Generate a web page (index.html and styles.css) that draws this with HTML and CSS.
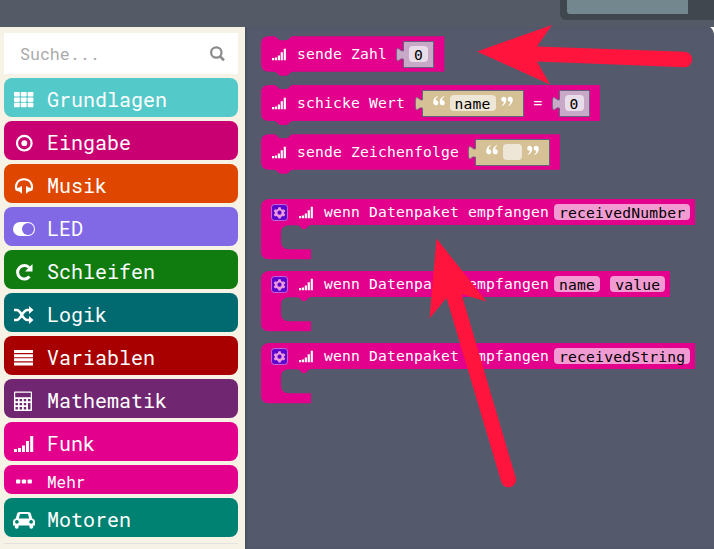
FILE: index.html
```html
<!DOCTYPE html>
<html lang="de">
<head>
<meta charset="utf-8">
<title>Blöcke</title>
<link rel="stylesheet" href="styles.css">
</head>
<body>
<svg class="defs" width="0" height="0">
  <defs>
    <symbol id="signal" viewBox="0 0 20 18"><path d="M0 14h3v3H0zM4 13h3v4H4zM8 10.500h3V17H8zM12 6h3v11h-3zM16.200 1h3v16h-3z"/></symbol>
    <symbol id="gear" viewBox="0 0 17 17"><rect x=".6" y=".6" width="15.800" height="15.800" rx="2.500" fill="#5a00cf" stroke="#c56bd8"/><path d="M7.300 3.200h2.400l.4 1.700 1.400.8 1.600-.5 1.200 2-1.200 1.200v1l1.200 1.100-1.200 2-1.600-.4-1.400.8-.4 1.500H7.300l-.4-1.500-1.400-.8-1.600.4-1.200-2 1.200-1.100v-1L2.700 7.200l1.200-2 1.600.5 1.400-.8z" fill="#ee99dc"/><circle cx="8.500" cy="8.700" r="2.100" fill="#5a00cf"/></symbol>
    <symbol id="quote" viewBox="0 0 12 10"><path d="M5 .3C3.600 1.400 2.600 2.800 2.600 4.300c1.600-.1 2.700.8 2.700 2.400S4.200 9.300 2.800 9.300C1.200 9.300.2 8 .2 6.200.2 3.200 2 1 4.600 0zM11.500.3c-1.400 1.100-2.400 2.500-2.400 4 1.600-.1 2.700.8 2.700 2.400s-1.100 2.600-2.500 2.600c-1.600 0-2.600-1.300-2.600-3.100C6.700 3.200 8.500 1 11.100 0z"/></symbol>
    <symbol id="tab" viewBox="0 0 8 16"><path d="M8 3.500C5 5.500 3 .5 1.200 1.500.2 3 .2 11 1 13.500 3 15.500 4 10 8 12.500" fill="currentColor" stroke="#66607c" stroke-width=".8"/></symbol>
    <symbol id="hat" viewBox="0 0 50 61"><path d="M0 26h50v.2h-1c-2 0-3 4-6 4s-4-4-6-4h-9q-8 0-8 8v8q0 8 8 8h22v10H8q-8 0-8-8z"/></symbol>
  </defs>
</svg>
<header class="topbar"><div class="board"><div class="screen"></div></div></header>
<main class="main">
  <nav class="toolbox">
    <div class="search"><span>Suche...</span><svg width="16" height="16" viewBox="0 0 16 16"><circle cx="7.300" cy="6.500" r="5.200" fill="none" stroke="#8a8a8a" stroke-width="2.200"/><path d="M11 10.300l4 4" stroke="#8a8a8a" stroke-width="2.600"/></svg></div>
    <div class="cat basic"><svg class="icon" viewBox="0 0 24 24"><g><rect x="2" y="4" width="5.800" height="4.500" rx=".8"/><rect x="8.800" y="4" width="5.800" height="4.500" rx=".8"/><rect x="15.600" y="4" width="5.800" height="4.500" rx=".8"/><rect x="2" y="9.400" width="5.800" height="4.500" rx=".8"/><rect x="8.800" y="9.400" width="5.800" height="4.500" rx=".8"/><rect x="15.600" y="9.400" width="5.800" height="4.500" rx=".8"/><rect x="2" y="14.800" width="5.800" height="4.500" rx=".8"/><rect x="8.800" y="14.800" width="5.800" height="4.500" rx=".8"/><rect x="15.600" y="14.800" width="5.800" height="4.500" rx=".8"/></g></svg><span>Grundlagen</span></div>
    <div class="cat input"><svg class="icon" viewBox="0 0 24 24"><circle cx="12.300" cy="12.200" r="7.300" fill="none" stroke="#fff" stroke-width="2.200"/><circle cx="12.300" cy="12.200" r="2.900"/></svg><span>Eingabe</span></div>
    <div class="cat music"><svg class="icon" viewBox="0 0 24 24"><path d="M4.500 16C2.500 10.500 6 5.300 12 5.300s9.500 5.200 7.500 10.700" fill="none" stroke="#fff" stroke-width="2"/><path d="M10 12.300v7H8.500v-1.200l-4.800-1.700Q4.500 13.700 8.500 13.300v-1zM14 12.300v7h1.500v-1.200l4.800-1.700q-.8-2.700-4.800-3.100v-1z"/></svg><span>Musik</span></div>
    <div class="cat led"><svg class="icon" viewBox="0 0 24 24"><rect x="1" y="5" width="22" height="14" rx="7"/><circle cx="16" cy="12" r="6" fill="#8169e6"/></svg><span>LED</span></div>
    <div class="cat loops"><svg class="icon" viewBox="0 0 24 24"><path d="M17.500 16.500A6.700 6.700 0 1 1 17 7.500" fill="none" stroke="#fff" stroke-width="3"/><path d="M20.500 4v7.500H13z"/></svg><span>Schleifen</span></div>
    <div class="cat logic"><svg class="icon" viewBox="0 0 24 24"><path d="M2 7h2.500C9.500 7 10 17 15.500 17H18M2 17h2.500C9.500 17 10 7 15.500 7H18" fill="none" stroke="#fff" stroke-width="2.600"/><path d="M17 3l4.500 4-4.500 4zM17 13l4.500 4-4.500 4z"/></svg><span>Logik</span></div>
    <div class="cat vars"><svg class="icon" viewBox="0 0 24 24"><path d="M2 4h19v3H2zM2 8.200h19v3H2zM2 12.300h19v3H2zM2 16.500h19v3H2z"/></svg><span>Variablen</span></div>
    <div class="cat math"><svg class="icon" viewBox="0 0 24 24"><path fill-rule="evenodd" d="M3 2.500h16q1 0 1 1v17.500q0 1-1 1H3q-1 0-1-1V3.500q0-1 1-1zM3.200 3.700v4.500h15.600V3.700zM3.500 10v2.200h2.400V10zm4.100 0v2.200H10V10zm4.200 0v2.200h2.400V10zm4.200 0v2.200h2.500V10zM3.500 14v2.200h2.400V14zm4.100 0v2.200H10V14zm4.200 0v2.200h2.400V14zm-8.300 4v2.500h2.400V18zm4.100 0v2.500H10V18zm4.200 0v2.500h2.400V18zm4.200-4v6.500h2.500V14z"/></svg><span>Mathematik</span></div>
    <div class="cat radio"><svg class="icon" viewBox="0 0 24 24"><use href="#signal" x="2" y="3" width="20" height="18"/></svg><span>Funk</span></div>
    <div class="cat more"><svg class="icon" viewBox="0 0 24 24"><rect x="4" y="9.500" width="4.300" height="4" rx=".8"/><rect x="9.800" y="9.500" width="4.300" height="4" rx=".8"/><rect x="15.600" y="9.500" width="4.300" height="4" rx=".8"/></svg><span>Mehr</span></div>
    <div class="cat motors"><svg class="icon" viewBox="0 0 24 24"><path fill-rule="evenodd" d="M7.500 4h9q2 0 2.500 2l1.200 4.500Q23 11 23 14v3.500h-1.800V19q0 1.700-1.900 1.700T17.400 19v-1.500H6.600V19q0 1.700-1.900 1.700T2.800 19v-1.500H1V14q0-3 2.800-3.500L5 6q.5-2 2.500-2zM8 6l-1.200 4.400h10.400L16 6zM4.900 12a1.900 1.900 0 1 0 .01 0zM19.100 12a1.900 1.900 0 1 0 .01 0z"/></svg><span>Motoren</span></div>
    <div class="divider"></div>
  </nav>
  <section class="flyout">
    <div class="block send-number">
      <svg class="shape" width="184" height="41"><path d="M8 .3h5c3 0 4 4 7 4h5c3 0 4-4 7-4h151.300v35.500H32c-3 0-4 4-7 4h-5c-3 0-4-4-7-4H8q-8 0-8-8V8.300q0-8 8-8z"/></svg>
      <svg class="signal"><use href="#signal"/></svg><span class="label">sende Zahl</span>
      <div class="value number"><svg class="tab"><use href="#tab"/></svg><span class="field">0</span></div>
    </div>
    <div class="block send-value">
      <svg class="shape" width="340" height="41"><path d="M8 0h5c3 0 4 4 7 4h5c3 0 4-4 7-4h307v36H32c-3 0-4 4-7 4h-5c-3 0-4-4-7-4H8q-8 0-8-8V8q0-8 8-8z"/></svg>
      <svg class="signal"><use href="#signal"/></svg><span class="label">schicke Wert</span>
      <div class="value text"><svg class="tab"><use href="#tab"/></svg><svg class="quote"><use href="#quote"/></svg><span class="field">name</span><svg class="quote close"><use href="#quote"/></svg></div>
      <span class="label equals">=</span>
      <div class="value number"><svg class="tab"><use href="#tab"/></svg><span class="field">0</span></div>
    </div>
    <div class="block send-string">
      <svg class="shape" width="300" height="41"><path d="M8 .3h5c3 0 4 4 7 4h5c3 0 4-4 7-4h267v35.500H32c-3 0-4 4-7 4h-5c-3 0-4-4-7-4H8q-8 0-8-8V8.300q0-8 8-8z"/></svg>
      <svg class="signal"><use href="#signal"/></svg><span class="label">sende Zeichenfolge</span>
      <div class="value text"><svg class="tab"><use href="#tab"/></svg><svg class="quote"><use href="#quote"/></svg><span class="field"></span><svg class="quote close"><use href="#quote"/></svg></div>
    </div>
    <div class="event first"><div class="event-head"><svg class="gear"><use href="#gear"/></svg><svg class="signal"><use href="#signal"/></svg><span class="label">wenn Datenpaket empfangen</span><span class="field">receivedNumber</span></div><svg class="arm" viewBox="0 26 50 35"><use href="#hat" width="50" height="61"/></svg></div>
    <div class="event"><div class="event-head"><svg class="gear"><use href="#gear"/></svg><svg class="signal"><use href="#signal"/></svg><span class="label">wenn Datenpaket empfangen</span><span class="field">name</span><span class="field second">value</span></div><svg class="arm" viewBox="0 26 50 35"><use href="#hat" width="50" height="61"/></svg></div>
    <div class="event"><div class="event-head"><svg class="gear"><use href="#gear"/></svg><svg class="signal"><use href="#signal"/></svg><span class="label">wenn Datenpaket empfangen</span><span class="field">receivedString</span></div><svg class="arm" viewBox="0 26 50 35"><use href="#hat" width="50" height="61"/></svg></div>
  </section>
</main>
<svg class="arrows" viewBox="0 0 714 549">
  <path class="corner" d="M710 27h4v7q-1-5-4-7z"/>
  <path d="M477 51.500L552 25 537 46.500 684.500 51.800a7.700 7.700 0 0 1 0 15.500L537 61.500 550 84.500z"/>
  <path d="M436.500 238.500L486.500 301.500 461.500 294 515.700 477.500a7.500 7.500 0 0 1-14.400 4.500L446.500 298 429.500 318.500z"/>
</svg>
</body>
</html>
```
FILE: styles.css
```css
* { box-sizing: border-box; }
body { margin: 0; width: 714px; height: 549px; overflow: hidden; display: flex; flex-direction: column; background: #545b67; font-family: "Roboto Mono", "DejaVu Sans Mono", monospace; }
.defs { position: absolute; }
svg { display: block; flex: none; }
.topbar { height: 27px; flex: none; display: flex; justify-content: flex-end; align-items: flex-start; }
.board { width: 154px; height: 20px; padding-left: 7px; background: #41474f; border-bottom-left-radius: 6px; }
.screen { width: 121px; height: 14px; background: #72878e; border-bottom-left-radius: 3px; }
.main { flex: 1; display: flex; min-height: 0; }
.toolbox { width: 245px; padding: 6px 7px 0 4px; background: #f6f3e6; display: flex; flex-direction: column; gap: 4px; }
.search { height: 41px; flex: none; padding: 0 13px 0 16px; background: #fff; color: #aaa; font-size: 16.600px; display: flex; align-items: center; justify-content: space-between; }
.search span { margin-top: -1px; }
.cat { height: 39px; flex: none; padding: 4px 0 0 8px; border-radius: 8px; color: #fff; font-size: 20px; line-height: 35px; display: flex; align-items: center; gap: 11px; white-space: pre; }
.icon { width: 24px; height: 24px; fill: #fff; }
.basic { background: #54c9c9; }
.input { background: #c90072; }
.music { background: #df4600; }
.led { background: #8169e6; }
.loops { background: #107c10; }
.logic { background: #006a70; }
.vars { background: #a80000; }
.math { background: #712672; }
.radio, .more { background: #e3008c; }
.more { height: 29px; font-size: 16px; }
.motors { background: #008272; }
.divider { height: 1px; margin-top: 2px; background: #e2e2e2; flex: none; }
.flyout { flex: 1; padding: 9px 0 0 17px; background: #545a6c; box-shadow: inset 2px 0 2px #4b5262; font-family: "DejaVu Sans Mono", monospace; font-size: 14.667px; letter-spacing: .18px; color: #fff; }
.block { position: relative; height: 36px; margin-bottom: 13px; padding-left: 10px; display: flex; align-items: center; }
.shape { position: absolute; left: -1px; top: 0; fill: #e3008c; }
.block > :not(.shape) { position: relative; }
.signal { width: 14.500px; height: 13px; margin-top: 1px; fill: #fff; }
.label { margin-left: 10.500px; white-space: pre; line-height: 18px; }
.value { height: 27px; margin: 0 0 0 16px; padding: 0 6px 0 5px; display: flex; align-items: center; border: 1px solid #66607c; }
.value .tab { position: absolute; left: -8px; top: 5px; width: 8px; height: 16px; }
.number { background: #c8a9c8; color: #c8a9c8; width: 31px; }
.text { background: #d6c197; color: #d6c197; padding: 0 10px; }
.send-value .text { margin-left: 16.500px; }
.number .field { background: #e9dde9; }
.text .field { background: #eee6d7; margin: 0 5px; min-width: 19px; }
.field { height: 16px; padding: 0 5px; border-radius: 4px; color: #000; line-height: 17px; background: #f29bd2; }
.quote { width: 12px; height: 10px; fill: #fff; margin-bottom: 5px; }
.close { transform: rotate(180deg); }
.equals { margin-left: 10px; }
.event { margin-bottom: 11px; }
.first { margin-top: 29px; }
.event-head { width: fit-content; height: 26px; margin-left: -1px; padding: 0 5px 0 10px; background: #e3008c; border-top-left-radius: 8px; display: flex; align-items: center; }
.event-head .label { margin-top: -1px; }
.gear { width: 17px; height: 17px; margin-right: 11px; }
.event .field { margin-left: 5px; }
.event .second { margin-left: 10px; }
.arm { width: 50px; height: 35px; margin-left: -1px; fill: #e3008c; }
.arrows { position: absolute; left: 0; top: 0; width: 714px; height: 549px; fill: #ff143d; pointer-events: none; }
.corner { fill: #fff; }
```
